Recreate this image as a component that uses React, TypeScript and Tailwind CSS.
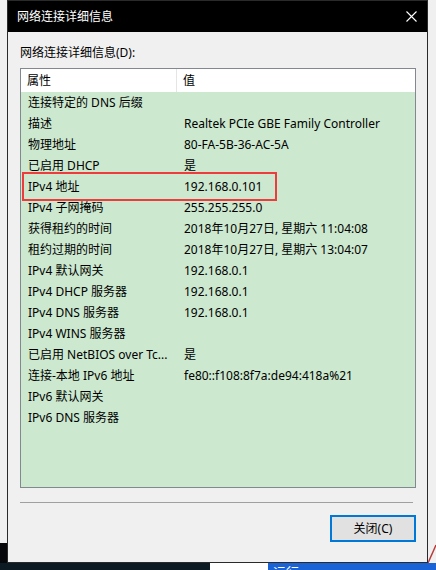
import React from 'react';

const rows: [string, string][] = [
  ['连接特定的 DNS 后缀', ''],
  ['描述', 'Realtek PCIe GBE Family Controller'],
  ['物理地址', '80-FA-5B-36-AC-5A'],
  ['已启用 DHCP', '是'],
  ['IPv4 地址', '192.168.0.101'],
  ['IPv4 子网掩码', '255.255.255.0'],
  ['获得租约的时间', '2018年10月27日, 星期六 11:04:08'],
  ['租约过期的时间', '2018年10月27日, 星期六 13:04:07'],
  ['IPv4 默认网关', '192.168.0.1'],
  ['IPv4 DHCP 服务器', '192.168.0.1'],
  ['IPv4 DNS 服务器', '192.168.0.1'],
  ['IPv4 WINS 服务器', ''],
  ['已启用 NetBIOS over Tc...', '是'],
  ['连接-本地 IPv6 地址', 'fe80::f108:8f7a:de94:418a%21'],
  ['IPv6 默认网关', ''],
  ['IPv6 DNS 服务器', ''],
];

const font = { fontFamily: '"Noto Sans", "Noto Sans CJK SC", sans-serif' };

export default function App() {
  return (
    <div className="w-[436px] h-[570px] overflow-hidden flex flex-col bg-[#0c1118] text-[12px] text-black" style={font}>
      <div className="flex h-[563px] shrink-0">
        {/* desktop strip left */}
        <div className="w-[7px] flex flex-col">
          <div className="h-[543px] bg-[#f0f0f0]"></div>
          <div className="flex-1 bg-[#05070a]"></div>
        </div>

        {/* dialog */}
        <div className="w-[421px] flex flex-col border border-[#2a2a2a] bg-[#f0f0f0]">
          <div className="h-[31px] shrink-0 bg-black flex items-center justify-between pl-[9px] pr-[9px]">
            <span className="text-white text-[12px]">网络连接详细信息</span>
            <svg width="11" height="11" viewBox="0 0 11 11" className="mr-[1px]">
              <path d="M0.5 0.5 L10.5 10.5 M10.5 0.5 L0.5 10.5" stroke="white" strokeWidth="1.1" />
            </svg>
          </div>

          <div className="flex-1 flex flex-col pl-[12px] pr-[11px] pt-[13px]">
            <div className="h-[16px] leading-[16px]">网络连接详细信息(D):</div>

            <div className="relative mt-[7px] h-[420px] border border-[#828790] bg-[#cce8cf] flex flex-col">
              <div className="h-[23px] bg-white flex items-center shrink-0">
                <div className="w-[156px] h-full flex items-center pl-[6px] border-r border-[#e5e5e5]">属性</div>
                <div className="pl-[6px]">值</div>
              </div>
              <div className="flex flex-col pt-[0.5px]">
                {rows.map(([k, v]) => (
                  <div key={k} className="h-[21px] flex items-center">
                    <div className="w-[157px] pl-[7px] whitespace-nowrap overflow-hidden">{k}</div>
                    <div className="pl-[6px] whitespace-nowrap">{v}</div>
                  </div>
                ))}
              </div>
              {/* highlight annotation */}
              <div className="absolute left-[1px] top-[103px] w-[255px] h-[29px] border-2 border-[#ee3b3b]"></div>
            </div>

            <div className="mt-[14px] h-[1px] w-[393px] bg-[#a0a0a0]"></div>

            <div className="flex justify-end mt-[12px]">
              <button className="w-[86px] h-[27px] border-2 border-[#0078d7] bg-[#e1e1e1] flex items-center justify-center text-[12px]">
                关闭(C)
              </button>
            </div>
          </div>
        </div>

        {/* desktop strip right */}
        <div className="w-[8px] flex flex-col bg-[#f0f0f0]">
          <div className="h-[535px]"></div>
          <svg width="8" height="28" viewBox="0 0 8 28" className="block">
            <path d="M0 28 L8 10" stroke="#b83a3a" strokeWidth="1.5" />
          </svg>
        </div>
      </div>

      {/* desktop / taskbar strip */}
      <div className="flex-1 flex">
        <div className="w-[210px] bg-[#0c1a24]"></div>
        <div className="w-[58px] bg-white"></div>
        <div className="flex-1 bg-[#1a63d6] text-white pl-[5px] leading-[18px] text-[13px]">运行</div>
      </div>
    </div>
  );
}
